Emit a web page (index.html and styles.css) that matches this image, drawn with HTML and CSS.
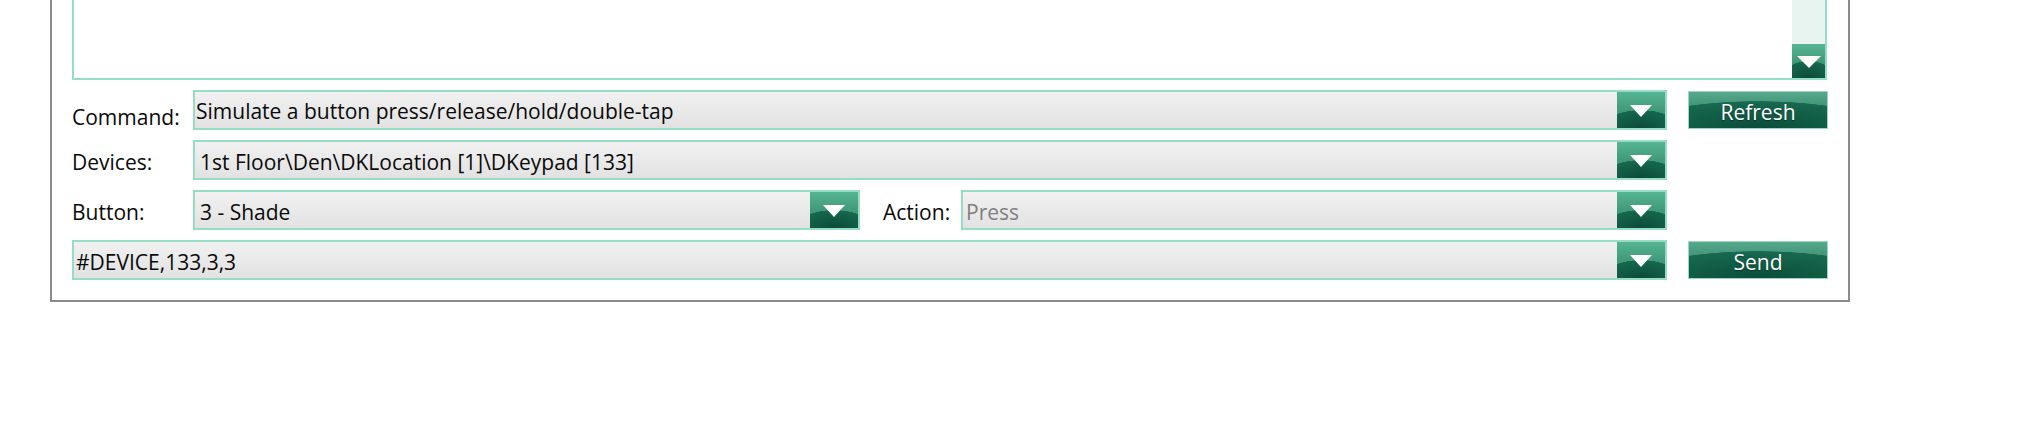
FILE: index.html
```html
<!DOCTYPE html>
<html>
<head>
<meta charset="utf-8">
<link rel="stylesheet" href="styles.css">
</head>
<body>
<div class="panel">
  <div class="log">
    <div class="log-body"></div>
    <div class="scrollbar">
      <div class="track"></div>
      <div class="gbtn scroll-down"><span class="tri"></span></div>
    </div>
  </div>
  <div class="row">
    <div class="main">
      <span class="label label-low">Command:</span>
      <div class="combo"><span class="value value-high">Simulate a button press/release/hold/double-tap</span><div class="gbtn arrow"><span class="tri"></span></div></div>
    </div>
    <div class="side"><button class="action-btn">Refresh</button></div>
  </div>
  <div class="row">
    <div class="main">
      <span class="label">Devices:</span>
      <div class="combo"><span class="value">1st Floor\Den\DKLocation [1]\DKeypad [133]</span><div class="gbtn arrow"><span class="tri"></span></div></div>
    </div>
    <div class="side"></div>
  </div>
  <div class="row">
    <div class="main">
      <span class="label">Button:</span>
      <div class="combo combo-button"><span class="value">3 - Shade</span><div class="gbtn arrow"><span class="tri"></span></div></div>
      <span class="label label-action">Action:</span>
      <div class="combo"><span class="value value-muted">Press</span><div class="gbtn arrow"><span class="tri"></span></div></div>
    </div>
    <div class="side"></div>
  </div>
  <div class="row">
    <div class="main">
      <div class="combo"><span class="value value-cmd">#DEVICE,133,3,3</span><div class="gbtn arrow"><span class="tri"></span></div></div>
    </div>
    <div class="side"><button class="action-btn">Send</button></div>
  </div>
</div>
</body>
</html>
```

FILE: styles.css
```css
* { box-sizing: border-box; }
html, body { margin: 0; padding: 0; background: #fff; }
body {
  font-family: "Open Sans", "Noto Sans", "Liberation Sans", sans-serif;
  font-size: 21px;
  color: #0a0a0a;
}
.panel {
  margin-left: 50px;
  width: 1800px;
  border: 2px solid #8c8c8c;
  border-top: none;
  padding: 0 20px 20px 20px;
  display: flex;
  flex-direction: column;
  gap: 10px;
}
.log {
  height: 80px;
  width: 1755px;
  border: 2px solid #97dcc5;
  border-top: none;
  display: flex;
  background: #fff;
}
.log-body { flex: 1; }
.scrollbar {
  width: 33px;
  display: flex;
  flex-direction: column;
}
.track { flex: 1; background: #e7f4ef; }
.scroll-down { height: 34px; }
.row {
  display: flex;
  height: 40px;
}
.main {
  flex: 1;
  display: flex;
  align-items: stretch;
}
.side {
  width: 140px;
  margin-left: 21px;
  display: flex;
}
.label {
  width: 121px;
  flex: none;
  display: flex;
  align-items: center;
  padding-top: 4px;
  white-space: nowrap;
}
.label-low { padding-top: 14px; }
.label-action { width: 78px; margin-left: 23px; }
.combo {
  flex: 1;
  display: flex;
  border: 2px solid #97dcc5;
  background: linear-gradient(#f1f1f1, #e2e2e2);
  min-width: 0;
}
.combo-button { flex: none; width: 667px; }
.value {
  flex: 1;
  display: flex;
  align-items: center;
  padding-left: 5px;
  padding-top: 4px;
  white-space: nowrap;
  overflow: hidden;
}
.value-high { padding-left: 1px; padding-top: 2px; }
.value-cmd { padding-left: 2px; }
.value-muted { color: #808080; padding-left: 3px; }
.gbtn {
  display: flex;
  align-items: center;
  justify-content: center;
  background:
    radial-gradient(ellipse 80% 50% at 50% 100%, #0b4a38 0%, #16684f 98%, rgba(0,0,0,0) 100%),
    linear-gradient(#55b593, #3f9878 55%, #2f8466);
}
.arrow { width: 48px; flex: none; }
.tri {
  width: 0;
  height: 0;
  border-left: 11.5px solid transparent;
  border-right: 11.5px solid transparent;
  border-top: 12px solid #fff;
  margin-top: 1px;
}
.scroll-down .tri {
  border-left-width: 12px;
  border-right-width: 12px;
  border-top-width: 12px;
  margin-top: 2px;
}
.action-btn {
  width: 140px;
  height: 38px;
  margin-top: 1px;
  border: 1px solid #9fd6c2;
  font-family: inherit;
  font-size: 21px;
  color: #fff;
  text-shadow: 0 1px 1px #063a2b;
  padding: 4px 0 0 0;
  background:
    radial-gradient(ellipse 90% 75% at 50% 100%, #0a4d3a 0%, #17694f 98%, rgba(0,0,0,0) 100%),
    linear-gradient(#56a98b, #3c8f72 50%, #2a7b5e);
}
```
